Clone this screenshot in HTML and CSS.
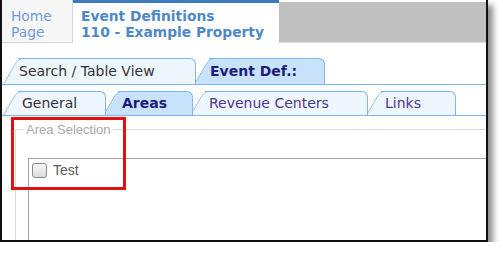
FILE: index.html
```html
<!DOCTYPE html>
<html lang="en">
<head>
    <meta charset="UTF-8">
    <title>Event Definitions</title>
    <link rel="stylesheet" href="styles.css">
</head>
<body>
    <div class="frame">
        <div class="header">
            <div class="home-tab">Home<br>Page</div>
            <div class="page-tab">Event Definitions<br>110 - Example Property</div>
            <div class="header-fill"></div>
        </div>

        <div class="tabs tabs-main">
            <div class="tab tab-search">Search / Table View</div>
            <div class="tab tab-def active">Event Def.:</div>
        </div>

        <div class="tabs tabs-sub">
            <div class="tab tab-general">General</div>
            <div class="tab tab-areas active">Areas</div>
            <div class="tab tab-revenue link">Revenue Centers</div>
            <div class="tab tab-links link">Links</div>
        </div>

        <fieldset class="area-selection">
            <legend>Area Selection</legend>
            <div class="area-list">
                <label class="area-item"><span class="check"></span>Test</label>
            </div>
        </fieldset>

        <!-- callout box -->
        <div class="highlight"></div>
    </div>
</body>
</html>
```

FILE: styles.css
```css
body {
    margin: 0;
    background-color: #fff;
    font-family: "DejaVu Sans", Verdana, sans-serif;
}
.frame {
    position: relative;
    width: 484px;
    height: 240px;
    border: 2px solid #111;
    border-top: none;
    box-shadow: 5px 5px 6px rgba(0, 0, 0, 0.45);
    overflow: hidden;
}

/* top page tabs */
.header {
    display: flex;
    height: 43px;
    font-size: 13.8px;
    line-height: 16px;
}
.home-tab {
    box-sizing: border-box;
    width: 71px;
    height: 43px;
    padding: 8px 0 0 9px;
    background-color: #f7f7f7;
    border-right: 1px solid #d4d4d4;
    border-bottom: 1px solid #d4d4d4;
    color: #6f9bd4;
}
.page-tab {
    box-sizing: border-box;
    width: 206px;
    height: 43px;
    padding: 5px 0 0 8px;
    border-top: 3px solid #3d79bd;
    font-weight: bold;
    color: #4f88c8;
    white-space: nowrap;
}
.header-fill {
    flex: 1;
    margin-top: 2px;
    height: 40px;
    background-color: #c0c0c0;
    border-bottom: 1px solid #dadada;
}

/* slanted tabs */
.tabs {
    display: flex;
    align-items: flex-end;
    padding-left: 16px;
    border-bottom: 1px solid #7db5ec;
}
.tabs-main {
    margin-top: 15px;
}
.tabs-sub {
    margin-top: 6px;
}
.tab {
    position: relative;
    box-sizing: border-box;
    height: 26px;
    margin-left: 12px;
    padding-left: 1px;
    background-color: #eef6fe;
    border-top: 1px solid #7db5ec;
    border-right: 1px solid #7db5ec;
    border-top-right-radius: 6px;
    color: #333;
    font-size: 14px;
    line-height: 24px;
    white-space: nowrap;
}
.tab::before {
    content: '';
    position: absolute;
    top: -1px;
    bottom: 0;
    left: -15px;
    width: 24px;
    background-color: inherit;
    border-top: 1px solid #7db5ec;
    border-left: 1px solid #7db5ec;
    border-top-left-radius: 6px;
    transform: skewX(-30deg);
    transform-origin: bottom left;
    z-index: -1;
}
.tab:first-child {
    margin-left: 0;
}
.tab:nth-child(1) { z-index: 4; }
.tab:nth-child(2) { z-index: 3; }
.tab:nth-child(3) { z-index: 2; }
.tab:nth-child(4) { z-index: 1; }
.tab.active {
    background-color: #c8e2fb;
    color: #1c1c7a;
    font-weight: bold;
}
.tab.link {
    color: #4b3590;
}
.tabs-sub .tab {
    height: 24px;
    padding-left: 4px;
    line-height: 22px;
}
.tab-search { width: 178px; }
.tab-def { width: 116px; margin-left: 13px; }
.tab-general { width: 88px; }
.tab-areas { width: 75px; }
.tab-revenue { width: 163px; }
.tab-links { width: 75px; margin-left: 13px; }

/* area selection */
.area-selection {
    min-width: 0;
    margin: 6px -20px 0 13px;
    padding: 0 0 0 8px;
    border: 1px solid #dcdcdc;
    font-family: "Liberation Sans", Arial, sans-serif;
    font-size: 13px;
}
.area-selection legend {
    padding: 0 2px;
    color: #aaa;
    line-height: 15px;
}
.area-list {
    height: 120px;
    margin: 21px 0 0 4px;
    padding: 4px 0 0 3px;
    border-top: 1px solid #a6a6a6;
    border-left: 1px solid #a6a6a6;
}
.area-item {
    display: flex;
    align-items: center;
    gap: 6px;
    color: #5a5a5a;
    font-size: 14px;
    line-height: 15px;
}
.check {
    box-sizing: border-box;
    width: 15px;
    height: 15px;
    border: 1px solid #8a8a8a;
    border-radius: 3px;
    background: linear-gradient(#f6f6f6, #dcdcdc);
}

.highlight {
    position: absolute;
    left: 9px;
    top: 117px;
    box-sizing: border-box;
    width: 115px;
    height: 73px;
    border: 3px solid #e41010;
}
```
